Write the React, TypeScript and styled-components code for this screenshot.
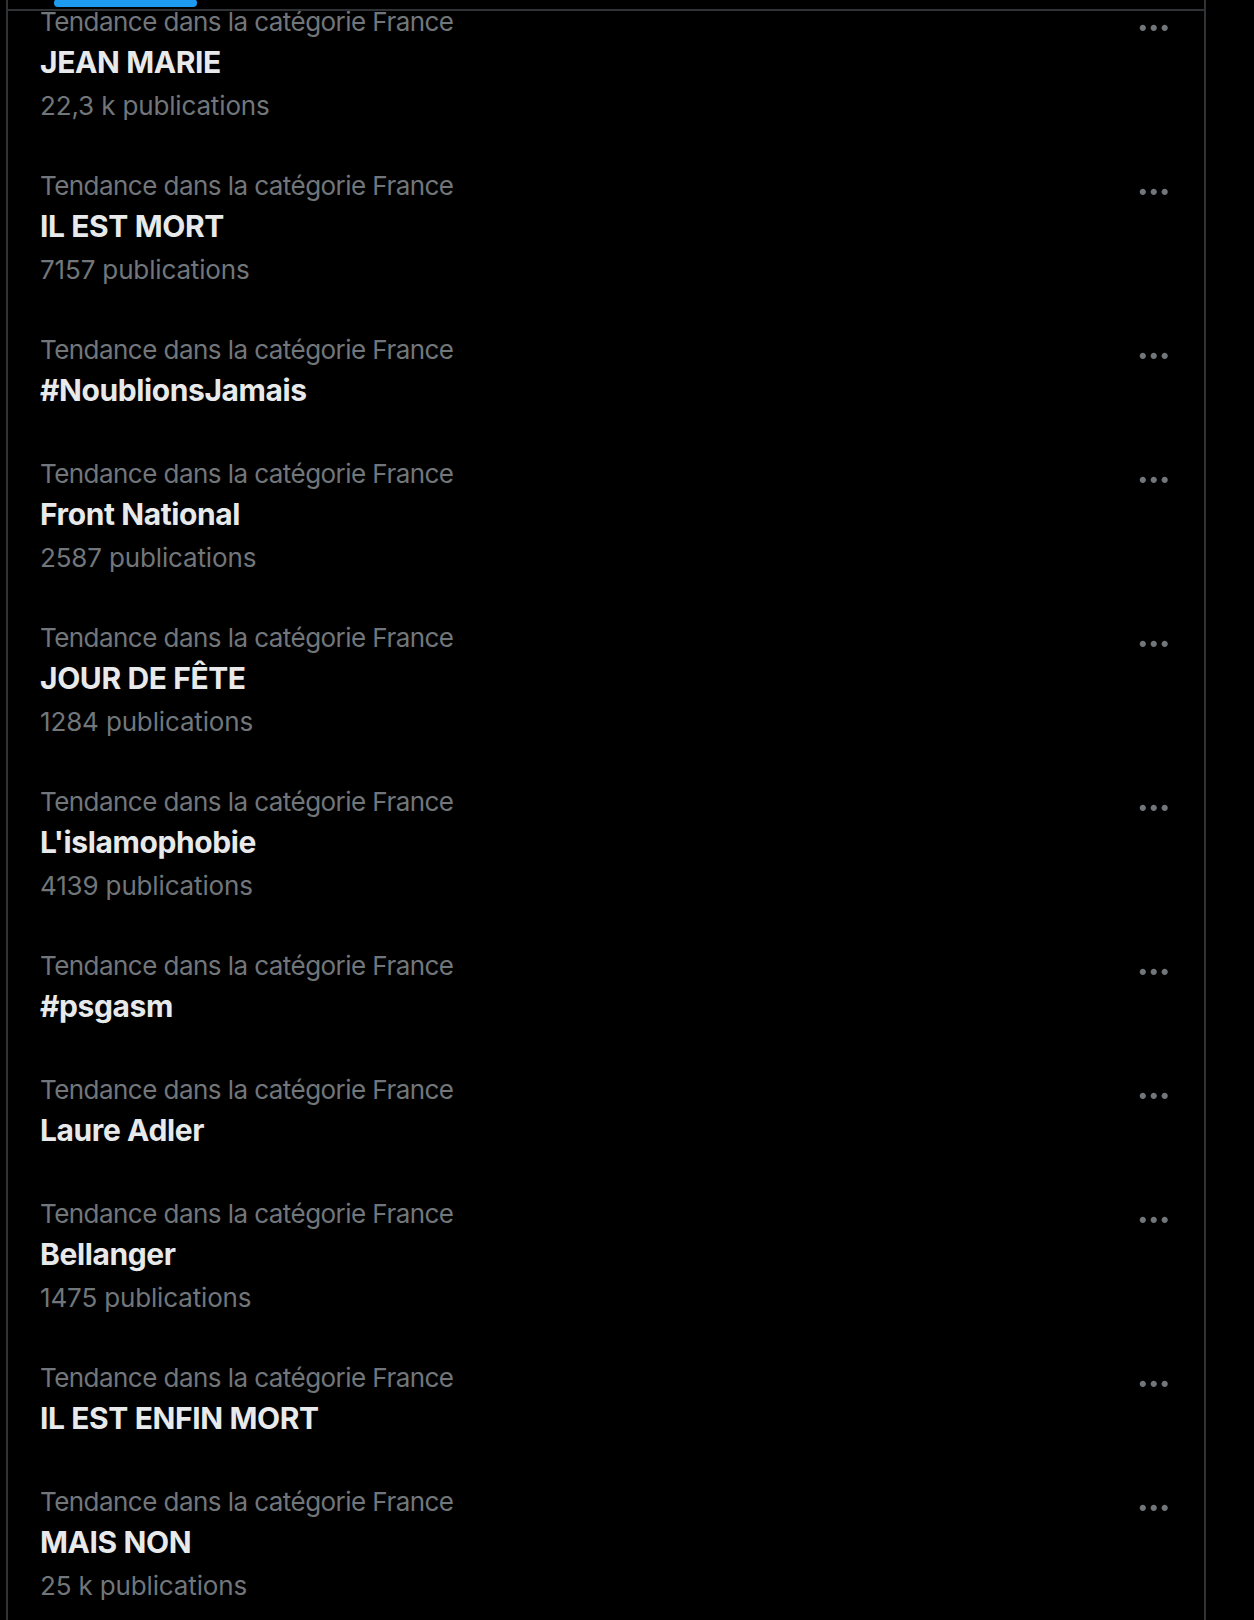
import React from 'react';
import styled, { createGlobalStyle } from 'styled-components';

const GlobalStyle = createGlobalStyle`
    html, body {
        margin: 0;
        padding: 0;
        background-color: #000;
    }
    body {
        font-family: Inter, "Noto Sans", "Liberation Sans", sans-serif;
    }
`;

const Page = styled.div`
    width: 100%;
    height: 1620px;
    background-color: #000;
    overflow: hidden;
`;

const Column = styled.main`
    position: relative;
    width: 1200px;
    height: 1620px;
    margin-left: 6px;
    box-sizing: border-box;
    border-left: 2px solid #2f3336;
    border-right: 2px solid #2f3336;
    overflow: hidden;
`;

// sticky tab bar, only its bottom edge is still visible
const TabHeader = styled.div`
    position: absolute;
    top: 0;
    left: 0;
    right: 0;
    height: 9px;
    display: flex;
    align-items: flex-end;
    padding-left: 46px;
    background-color: #000;
    border-bottom: 2px solid #2f3336;
    z-index: 2;
`;

const TabIndicator = styled.div`
    width: 143px;
    height: 8px;
    margin-bottom: 2px;
    border-radius: 9999px;
    background-color: #1d9bf0;
`;

const TrendList = styled.section`
    display: flex;
    flex-direction: column;
    margin-top: -18px;
`;

const TrendRow = styled.div`
    display: flex;
    justify-content: space-between;
    align-items: flex-start;
    padding: 24px 32px;
`;

const TrendText = styled.div`
    display: flex;
    flex-direction: column;
`;

const Category = styled.span`
    font-size: 26px;
    line-height: 32px;
    letter-spacing: -0.55px;
    color: #71767b;
`;

const Title = styled.span`
    padding-top: 4px;
    font-size: 30px;
    line-height: 40px;
    font-weight: 700;
    letter-spacing: -0.4px;
    color: #e7e9ea;
`;

const Count = styled.span`
    margin-top: 8px;
    font-size: 26px;
    line-height: 32px;
    letter-spacing: -0.15px;
    color: #71767b;
`;

const MoreButton = styled.div`
    width: 37.5px;
    height: 37.5px;
    margin-top: 3px;
    color: #71767b;
    flex-shrink: 0;
    svg {
        width: 100%;
        height: 100%;
        display: block;
    }
`;

const TRENDS = [
    { title: 'JEAN MARIE', count: '22,3 k publications' },
    { title: 'IL EST MORT', count: '7157 publications' },
    { title: '#NoublionsJamais' },
    { title: 'Front National', count: '2587 publications' },
    { title: 'JOUR DE FÊTE', count: '1284 publications' },
    { title: "L'islamophobie", count: '4139 publications' },
    { title: '#psgasm' },
    { title: 'Laure Adler' },
    { title: 'Bellanger', count: '1475 publications' },
    { title: 'IL EST ENFIN MORT' },
    { title: 'MAIS NON', count: '25 k publications' },
];

function MoreIcon() {
    return (
        <svg viewBox="0 0 24 24" aria-hidden="true">
            <path
                fill="currentColor"
                d="M3 12c0-1.1.9-2 2-2s2 .9 2 2-.9 2-2 2-2-.9-2-2zm9 2c1.1 0 2-.9 2-2s-.9-2-2-2-2 .9-2 2 .9 2 2 2zm7 0c1.1 0 2-.9 2-2s-.9-2-2-2-2 .9-2 2 .9 2 2 2z"
            />
        </svg>
    );
}

function App() {
    return (
        <Page>
            <GlobalStyle />
            <Column>
                <TabHeader>
                    <TabIndicator />
                </TabHeader>
                <TrendList>
                    {TRENDS.map((trend) => (
                        <TrendRow key={trend.title}>
                            <TrendText>
                                <Category>Tendance dans la catégorie France</Category>
                                <Title>{trend.title}</Title>
                                {trend.count && <Count>{trend.count}</Count>}
                            </TrendText>
                            <MoreButton>
                                <MoreIcon />
                            </MoreButton>
                        </TrendRow>
                    ))}
                </TrendList>
            </Column>
        </Page>
    );
}

export default App;
